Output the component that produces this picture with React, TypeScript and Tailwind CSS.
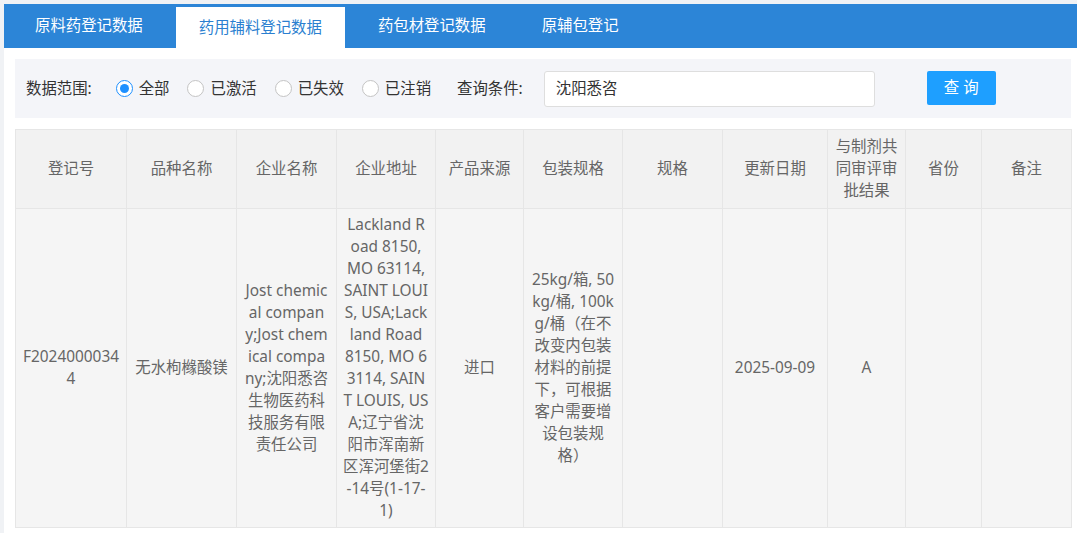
import { useState } from 'react'

const tabs = ['原料药登记数据', '药用辅料登记数据', '药包材登记数据', '原辅包登记']
const scopes = ['全部', '已激活', '已失效', '已注销']

const columns = [
  { w: 'w-[111px]', head: ['登记号'] },
  { w: 'w-[110px]', head: ['品种名称'] },
  { w: 'w-[100px]', head: ['企业名称'] },
  { w: 'w-[99px]', head: ['企业地址'] },
  { w: 'w-[88px]', head: ['产品来源'] },
  { w: 'w-[99px]', head: ['包装规格'] },
  { w: 'w-[100px]', head: ['规格'] },
  { w: 'w-[105px]', head: ['更新日期'] },
  { w: 'w-[78px]', head: ['与制剂共', '同审评审', '批结果'] },
  { w: 'w-[76px]', head: ['省份'] },
  { w: 'w-[90px]', head: ['备注'] },
]

// wrapped the way the source page breaks them (break-all at the column width)
const row: string[][] = [
  ['F2024000034', '4'],
  ['无水枸橼酸镁'],
  ['Jost chemic', 'al compan', 'y;Jost chem', 'ical compa', 'ny;沈阳悉咨', '生物医药科', '技服务有限', '责任公司'],
  [
    'Lackland R',
    'oad 8150,',
    'MO 63114,',
    'SAINT LOUI',
    'S, USA;Lack',
    'land Road',
    '8150, MO 6',
    '3114, SAIN',
    'T LOUIS, US',
    'A;辽宁省沈',
    '阳市浑南新',
    '区浑河堡街2',
    '-14号(1-17-',
    '1)',
  ],
  ['进口'],
  ['25kg/箱, 50', 'kg/桶, 100k', 'g/桶（在不', '改变内包装', '材料的前提', '下，可根据', '客户需要增', '设包装规', '格）'],
  [],
  ['2025-09-09'],
  ['A'],
  [],
  [],
]

function Lines({ lines }: { lines: string[] }) {
  return (
    <>
      {lines.map((l, i) => (
        <span key={i} className="block whitespace-nowrap">
          {l}
        </span>
      ))}
    </>
  )
}

function Radio({ label, checked, onClick }: { label: string; checked: boolean; onClick: () => void }) {
  return (
    <label onClick={onClick} className="flex items-center cursor-pointer mr-[18px]">
      <span
        className={`w-[17px] h-[17px] rounded-full border flex items-center justify-center bg-white ${
          checked ? 'border-[#1e90ff]' : 'border-[#c4c4c4]'
        }`}
      >
        {checked && <span className="w-[9px] h-[9px] rounded-full bg-[#1e90ff]" />}
      </span>
      <span className="ml-[6px] text-[#333]">{label}</span>
    </label>
  )
}

export default function App() {
  const [active, setActive] = useState(1)
  const [scope, setScope] = useState(0)

  return (
    <div
      className="min-h-[533px] bg-[#f0f2f5] pl-[4px] pt-[4px] text-[15.4px] leading-[22px]"
      style={{ fontFamily: '"Noto Sans", "Noto Sans CJK SC", sans-serif' }}
    >
      <div className="bg-white min-h-[529px] pb-[6px]">
        <div className="h-[44px] bg-[#2c85d7] flex items-end pl-[8px] gap-[10px]">
          {tabs.map((t, i) => (
            <div
              key={t}
              onClick={() => setActive(i)}
              className={`px-[23px] cursor-pointer flex items-center ${
                i === active ? 'h-[41px] bg-white text-[#2b7fd0]' : 'h-[44px] text-white'
              }`}
            >
              {t}
            </div>
          ))}
        </div>

        <div className="pl-[11px] pr-[6px]">
          <div className="mt-[11px] h-[59px] bg-[#f4f5f9] flex items-center pl-[11px] text-[#333]">
            <span className="mr-[24px]">数据范围:</span>
            {scopes.map((s, i) => (
              <Radio key={s} label={s} checked={scope === i} onClick={() => setScope(i)} />
            ))}
            <span className="ml-[8px] mr-[21px]">查询条件:</span>
            <div className="w-[331px] h-[36px] bg-white border border-[#dedede] rounded-[3px] flex items-center px-[11px] text-[#333]">
              沈阳悉咨
            </div>
            <button className="ml-[52px] w-[69px] h-[34px] mb-[2px] bg-[#1e9fff] text-white rounded-[2px] tracking-[4px] pl-[4px]">
              查询
            </button>
          </div>

          <table className="mt-[11px] table-fixed border-collapse w-[1056px] text-[#666] text-center">
            <colgroup>
              {columns.map((c, i) => (
                <col key={i} className={c.w} />
              ))}
            </colgroup>
            <thead>
              <tr className="bg-[#f2f2f2] h-[78px]">
                {columns.map((c, i) => (
                  <th key={i} className="border border-[#e6e6e6] font-normal px-[4px] py-[6px]">
                    <Lines lines={c.head} />
                  </th>
                ))}
              </tr>
            </thead>
            <tbody>
              <tr className="bg-[#f5f5f5]">
                {row.map((cell, i) => (
                  <td key={i} className="border border-[#e6e6e6] px-[2px] py-[5px] align-middle">
                    <Lines lines={cell} />
                  </td>
                ))}
              </tr>
            </tbody>
          </table>
        </div>
      </div>
    </div>
  )
}
